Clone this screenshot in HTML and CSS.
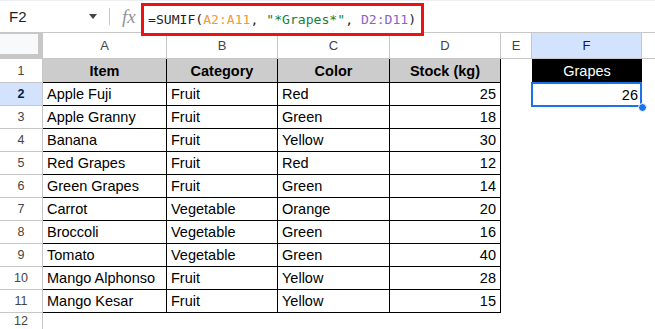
FILE: index.html
```html
<!DOCTYPE html>
<html>
<head>
<meta charset="utf-8">
<link rel="stylesheet" href="styles.css">
</head>
<body>
<div class="app">
  <div class="fbar">
    <div class="namebox"><span class="ref">F2</span><span class="arrow"></span></div>
    <div class="sep"></div>
    <div class="fx">fx</div>
    <div class="formula"><span>=SUMIF(</span><span class="r1">A2:A11</span><span>, </span><span class="str">"*Grapes*"</span><span>, </span><span class="r2">D2:D11</span><span>)</span></div>
  </div>
  <div class="sheet">
    <div class="corner"><div class="corner-in"></div></div>
    <div class="ch">A</div><div class="ch">B</div><div class="ch">C</div><div class="ch">D</div><div class="ch">E</div><div class="ch ch-sel">F</div><div class="ch ch-last"></div>

    <div class="rh">1</div>
    <div class="c hd">Item</div><div class="c hd">Category</div><div class="c hd">Color</div><div class="c hd">Stock (kg)</div>
    <div class="e"></div><div class="e black">Grapes</div><div class="e"></div>

    <div class="rh rh-sel">2</div>
    <div class="c">Apple Fuji</div><div class="c">Fruit</div><div class="c">Red</div><div class="c num">25</div>
    <div class="e"></div><div class="e num sel">26<span class="selbox"></span><span class="handle"></span></div><div class="e"></div>

    <div class="rh">3</div>
    <div class="c">Apple Granny</div><div class="c">Fruit</div><div class="c">Green</div><div class="c num">18</div>
    <div class="e"></div><div class="e"></div><div class="e"></div>

    <div class="rh">4</div>
    <div class="c">Banana</div><div class="c">Fruit</div><div class="c">Yellow</div><div class="c num">30</div>
    <div class="e"></div><div class="e"></div><div class="e"></div>

    <div class="rh">5</div>
    <div class="c">Red Grapes</div><div class="c">Fruit</div><div class="c">Red</div><div class="c num">12</div>
    <div class="e"></div><div class="e"></div><div class="e"></div>

    <div class="rh">6</div>
    <div class="c">Green Grapes</div><div class="c">Fruit</div><div class="c">Green</div><div class="c num">14</div>
    <div class="e"></div><div class="e"></div><div class="e"></div>

    <div class="rh">7</div>
    <div class="c">Carrot</div><div class="c">Vegetable</div><div class="c">Orange</div><div class="c num">20</div>
    <div class="e"></div><div class="e"></div><div class="e"></div>

    <div class="rh">8</div>
    <div class="c">Broccoli</div><div class="c">Vegetable</div><div class="c">Green</div><div class="c num">16</div>
    <div class="e"></div><div class="e"></div><div class="e"></div>

    <div class="rh">9</div>
    <div class="c">Tomato</div><div class="c">Vegetable</div><div class="c">Green</div><div class="c num">40</div>
    <div class="e"></div><div class="e"></div><div class="e"></div>

    <div class="rh">10</div>
    <div class="c">Mango Alphonso</div><div class="c">Fruit</div><div class="c">Yellow</div><div class="c num">28</div>
    <div class="e"></div><div class="e"></div><div class="e"></div>

    <div class="rh">11</div>
    <div class="c">Mango Kesar</div><div class="c">Fruit</div><div class="c">Yellow</div><div class="c num">15</div>
    <div class="e"></div><div class="e"></div><div class="e"></div>

    <div class="rh rh-last">12</div>
    <div class="e"></div><div class="e"></div><div class="e"></div><div class="e"></div><div class="e"></div><div class="e"></div><div class="e"></div>
  </div>
</div>
</body>
</html>
```

FILE: styles.css
```css
* { box-sizing: border-box; }
html, body { margin: 0; padding: 0; background: #fff; }
body { font-family: "Liberation Sans", Arial, sans-serif; color: #000; }
.app { width: 655px; height: 329px; overflow: hidden; display: flex; flex-direction: column; }

.fbar {
  height: 33px; flex: none; display: flex; align-items: center;
  border-top: 1px solid #eceef1; border-bottom: 1px solid #c7c7c7;
}
.namebox {
  width: 101px; padding-left: 9px; padding-right: 4px;
  display: flex; justify-content: space-between; align-items: center;
}
.ref { font-size: 15px; color: #1f1f1f; }
.arrow {
  width: 0; height: 0;
  border-left: 4.5px solid transparent; border-right: 4.5px solid transparent;
  border-top: 5px solid #444;
}
.sep { width: 1px; height: 17px; background: #c7c7c7; margin-left: 8px; }
.fx {
  width: 31px; padding-left: 12px;
  font-family: "Liberation Serif", serif; font-style: italic; font-size: 19px; color: #8f959b;
}
.formula {
  position: relative; z-index: 3;
  align-self: flex-start; margin-top: 2px;
  width: 283px; height: 33px;
  border: 3px solid #ee1111;
  padding-left: 4px;
  display: flex; align-items: center;
  font-family: "DejaVu Sans Mono", "Liberation Mono", monospace; font-size: 13.1px; color: #1f1f1f;
  white-space: pre;
  background: #fff;
}
.r1 { color: #f09b33; }
.str { color: #188038; }
.r2 { color: #8b63c6; }

.sheet {
  flex: 1;
  display: grid;
  grid-template-columns: 43px 124px 111px 112px 111px 31px 110px 1fr;
  grid-template-rows: 26px 24px repeat(10, 23px) 1fr;
  font-size: 14.5px;
}
.corner { background: #c7c7c7; padding: 0 5px 5px 0; border-top: 1px solid #c7c7c7; }
.corner-in { background: #f8f9fa; height: 100%; }
.ch {
  border-right: 1px solid #c7c7c7; border-bottom: 1px solid #c7c7c7;
  display: flex; align-items: center; justify-content: center;
  font-size: 13px; color: #444;
}
.ch-sel { background: #d3e3fd; color: #0b1e3c; }
.ch-last { border-right: none; }
.rh {
  border-right: 1px solid #c7c7c7; border-bottom: 1px solid #c7c7c7;
  display: flex; align-items: center; justify-content: center;
  font-size: 12.5px; color: #444;
}
.rh-sel { background: #d3e3fd; color: #041e49; font-weight: bold; }
.rh-last { border-bottom: none; }
.c {
  border-right: 1px solid #000; border-bottom: 1px solid #000;
  display: flex; align-items: center; padding: 0 4px 0 4px;
  white-space: nowrap; overflow: hidden;
}
.hd { background: #cccccc; font-weight: bold; justify-content: center; }
.num { justify-content: flex-end; padding-right: 4px; }
.e { display: flex; align-items: center; padding: 0 4px; white-space: nowrap; }
.black { background: #000; color: #fff; justify-content: center; }
.sel { position: relative; }
.selbox {
  position: absolute; left: -1px; top: -1px; right: 0; bottom: -1px;
  border: 2px solid #1a73e8;
}
.handle {
  position: absolute; right: -5px; bottom: -6px;
  width: 9px; height: 9px; border-radius: 50%;
  background: #1a73e8; border: 1px solid #fff;
}
```
